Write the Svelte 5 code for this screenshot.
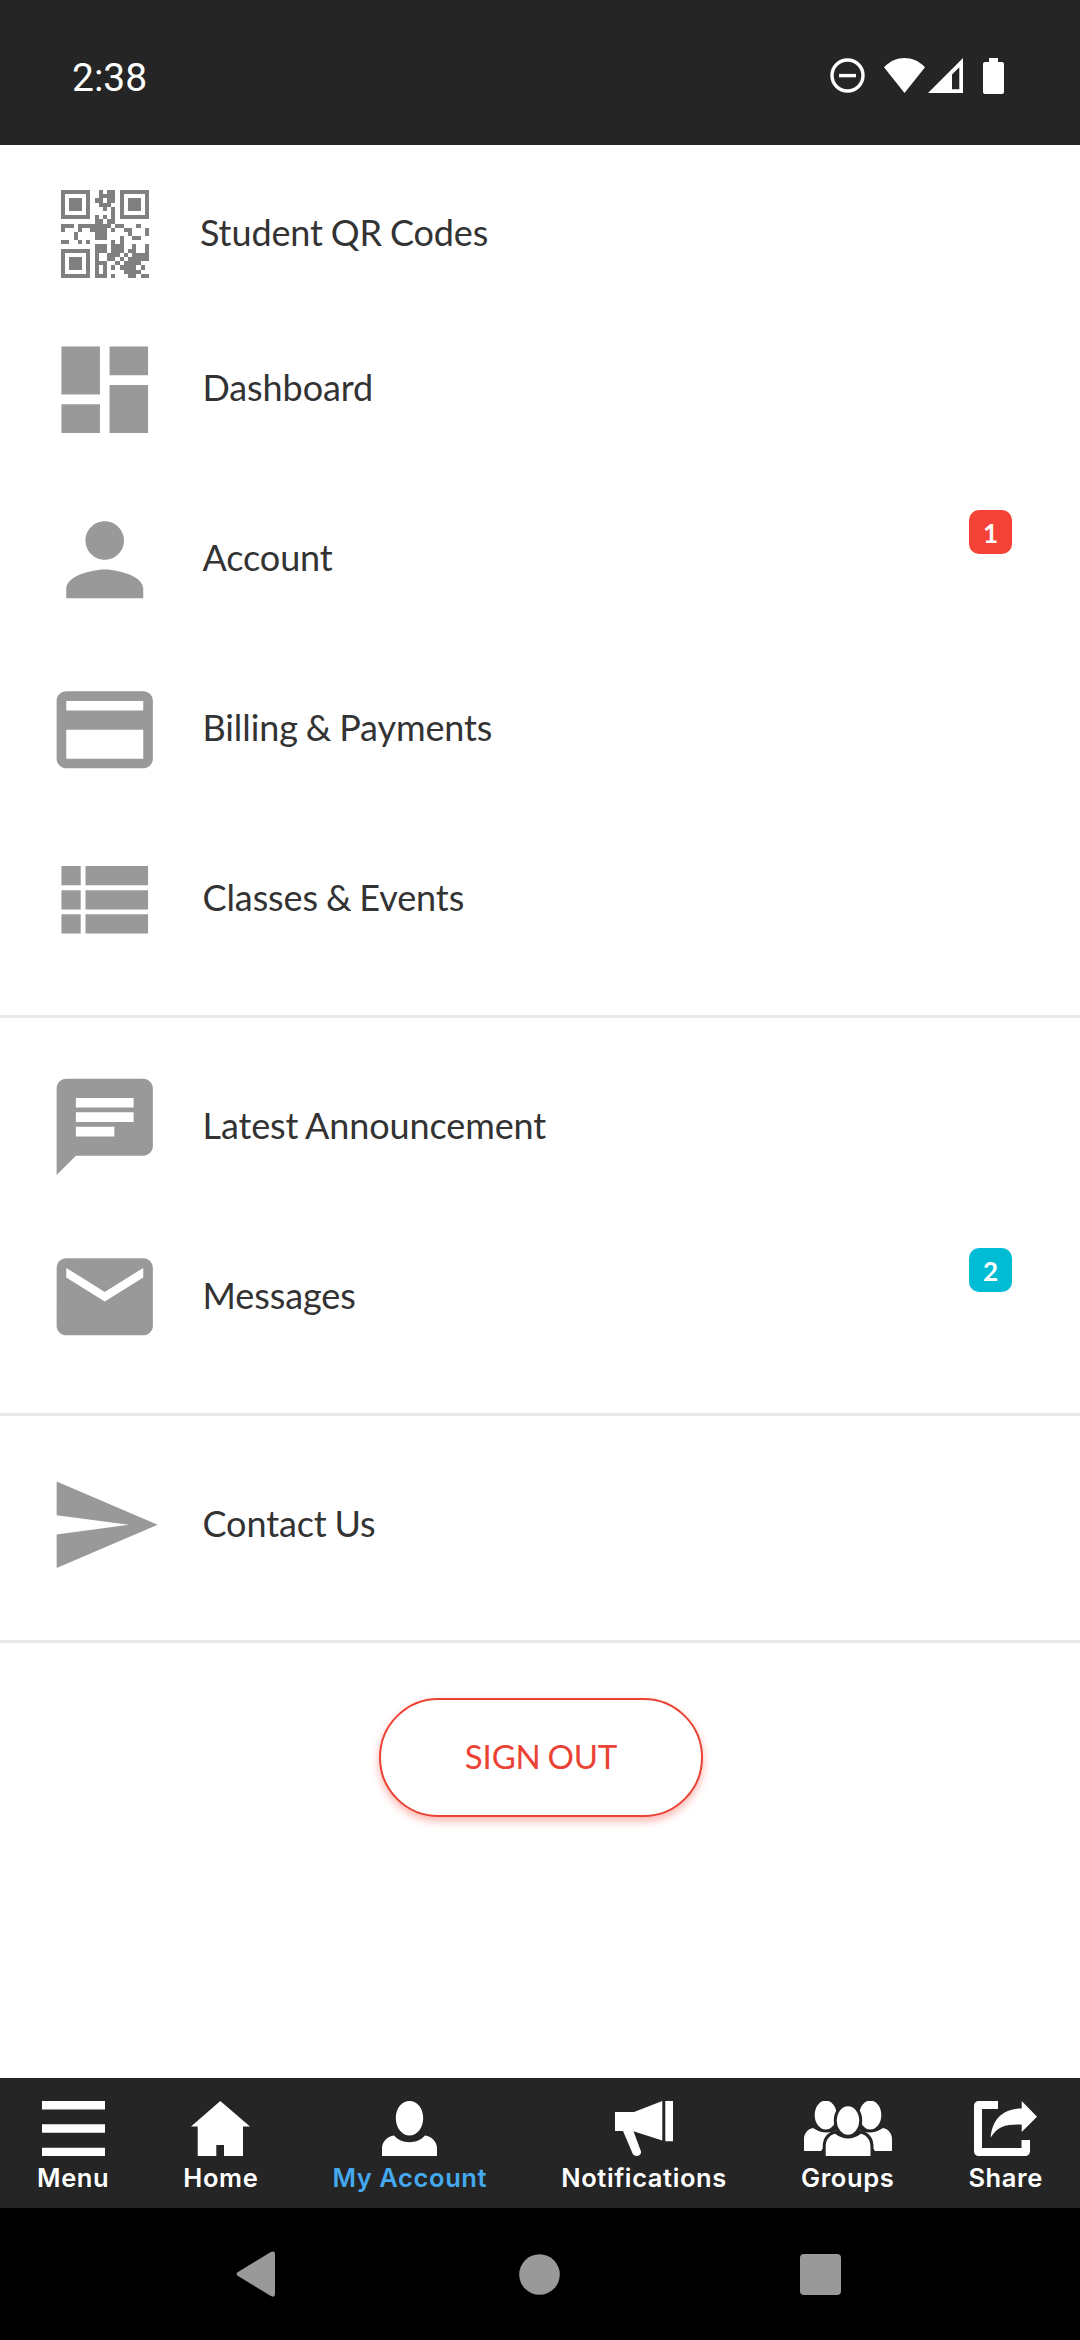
<script lang="ts">
    type MenuItem = { label: string; icon: string; badge?: string; tone?: string };

    const groups: MenuItem[][] = [
        [
            { label: 'Dashboard', icon: 'M3 13h8V3H3v10zm0 8h8v-6H3v6zm10 0h8V11h-8v10zm0-18v6h8V3h-8z' },
            {
                label: 'Account',
                icon: 'M12 12c2.21 0 4-1.79 4-4s-1.79-4-4-4-4 1.79-4 4 1.79 4 4 4zm0 2c-2.67 0-8 1.34-8 4v2h16v-2c0-2.66-5.33-4-8-4z',
                badge: '1',
                tone: 'red'
            },
            {
                label: 'Billing & Payments',
                icon: 'M20 4H4c-1.11 0-2 .89-2 2v12c0 1.11.89 2 2 2h16c1.11 0 2-.89 2-2V6c0-1.11-.89-2-2-2zm0 14H4v-6h16v6zm0-10H4V6h16v2z'
            },
            {
                label: 'Classes & Events',
                icon: 'M3 14h4v-4H3v4zm0 5h4v-4H3v4zM3 9h4V5H3v4zm5 5h13v-4H8v4zm0 5h13v-4H8v4zM8 5v4h13V5H8z'
            }
        ],
        [
            {
                label: 'Latest Announcement',
                icon: 'M4 2h16c1.1 0 2 .9 2 2v12c0 1.1-.9 2-2 2H6l-4 4V4c0-1.1.9-2 2-2zM6 6v2h12V6H6zm0 3v2h12V9H6zm0 3v2h8v-2H6z'
            },
            {
                label: 'Messages',
                icon: 'M20 4H4c-1.1 0-1.99.9-1.99 2L2 18c0 1.1.9 2 2 2h16c1.1 0 2-.9 2-2V6c0-1.1-.9-2-2-2zm0 4l-8 5-8-5V6l8 5 8-5v2z',
                badge: '2',
                tone: 'cyan'
            }
        ],
        [{ label: 'Contact Us', icon: 'M2.01 21L23 12 2.01 3 2 10l15 2-15 2z' }]
    ];

    // one string per row of modules
    const qr = [
        '#######..#.##.#######',
        '#.....#..####.#.....#',
        '#.###.#.##.##.#.###.#',
        '#.###.#..###..#.###.#',
        '#.###.#...#.#.#.###.#',
        '#.....#.....#.#.....#',
        '#######.#.#.#.#######',
        '........##.##........',
        '###.########.##...#..',
        '#...#..####.#..##...#',
        '...#....###.....#...#',
        '...#....###...#..##..',
        '##..#.#.....#.#......',
        '........###.###..#..#',
        '#######.###.###.##..#',
        '#.....#.#..###.#.####',
        '#.###.#.#..##.#.#####',
        '#.###.#.###..#.####..',
        '#.###.#.#.#.#.####.#.',
        '#.....#.#.#....####..',
        '#######.###.#...##.##'
    ];

    const qrPath = qr
        .map((row, y) => [...row].map((c, x) => (c === '#' ? `M${x} ${y}h1v1h-1z` : '')).join(''))
        .join('');

    let active = 'My Account';

    const tabs = [
        { label: 'Menu', width: 63, icon: 'M0 0h63v8.4H0zM0 23.2h63v8.6H0zM0 46.8h63V55H0z' },
        { label: 'Home', width: 59, icon: 'M29.3 0L59 25.5h-7V55H33V44h-7.7v11H6.7V25.5H0z' },
        {
            label: 'My Account',
            width: 55,
            icon: 'M27.5 0c7.5 0 13.7 7 13.7 17s-6.2 17.5-13.7 17.5S13.8 27 13.8 17 20 0 27.5 0zM12 34.5c4 4.5 9 6.7 15.5 6.7S39 39 43 34.5c7 1 12 6.5 12 13V55H0v-7.5c0-6.5 5-12 12-13z'
        },
        {
            label: 'Notifications',
            width: 58,
            icon: 'M0 11h19L47.3 0v39.5L18.5 30.2 26 50.5c.8 4.5-6.5 6-8.3 2.3L8 30H0zM50.3 0H58v40.3h-7.7z'
        },
        { label: 'Groups', width: 88, icon: '' },
        {
            label: 'Share',
            width: 63,
            icon: 'M5 0h19v8H8v39h39.5v-8H56v11c0 3-2 5-5 5H5c-3 0-5-2-5-5V5c0-3 2-5 5-5zM47.7 0L63 15.7 47.7 31v-7.5c-15-.5-24 1.5-31 13C18 19 28 7.5 47.7 7.5z'
        }
    ];
</script>

<div class="screen">
    <header class="status">
        <span class="time">2:38</span>
        <div class="status-icons">
            <svg class="dnd" width="35" height="35" viewBox="0 0 35 35">
                <circle cx="17.5" cy="17.5" r="15.5" fill="none" stroke="#fff" stroke-width="3.4" />
                <path d="M9 15.9h17v3.4H9z" />
            </svg>
            <svg class="wifi" width="41" height="35" viewBox="0 0 41 35">
                <path d="M0 9.3C12-3 29-3 41 9.3L20.5 35z" />
            </svg>
            <svg class="signal" width="35" height="35" viewBox="0 0 35 35">
                <path fill-rule="evenodd" d="M35 0v35H0zM31.3 9.3L24 16.6v14.7h7.3z" />
            </svg>
            <svg width="21" height="36" viewBox="0 0 21 36">
                <path d="M6 0h9v4h4q2 0 2 2v28q0 2-2 2H2q-2 0-2-2V6q0-2 2-2h4z" />
            </svg>
        </div>
    </header>

    <main>
        <div class="item qr-item">
            <svg class="qr" viewBox="0 0 21 21" shape-rendering="crispEdges">
                <path d={qrPath} />
            </svg>
            <span class="label">Student QR Codes</span>
        </div>

        {#each groups as group}
            <div class="group">
                {#each group as item}
                    <div class="item">
                        <svg class="icon" viewBox="0 0 24 24"><path d={item.icon} /></svg>
                        <span class="label">{item.label}</span>
                        {#if item.badge}
                            <span class="badge {item.tone}">{item.badge}</span>
                        {/if}
                    </div>
                {/each}
            </div>
        {/each}

        <button class="sign-out">SIGN OUT</button>
    </main>

    <nav class="tabs">
        {#each tabs as tab}
            <!-- svelte-ignore a11y_click_events_have_key_events, a11y_no_static_element_interactions -->
            <div class="tab" class:active={tab.label === active} on:click={() => (active = tab.label)}>
                <svg width={tab.width} height="55" viewBox="0 0 {tab.width} 55">
                    {#if tab.label === 'Groups'}
                        <ellipse cx="21.7" cy="14" rx="11" ry="14.5" />
                        <ellipse cx="66.3" cy="14" rx="11" ry="14.5" />
                        <path d="M0 50V38c0-6 4-10 9-11q12 8 24 2L17 50zM88 50V38c0-6-4-10-9-11q-12 8-24 2l16 21z" />
                        <g class="front">
                            <path d="M21.7 58V46c0-7 3-11.5 9.3-13.3q13 9.5 26 0C63.3 34.5 66.5 39 66.5 46v12z" />
                            <ellipse cx="44" cy="19.5" rx="11.2" ry="14.3" />
                        </g>
                    {:else}
                        <path d={tab.icon} />
                    {/if}
                </svg>
                <span>{tab.label}</span>
            </div>
        {/each}
    </nav>

    <footer class="system-nav">
        <svg width="42" height="46" viewBox="0 0 42 46">
            <path d="M34 1.5q5-3 5 2v39q0 5-5 2L2 25q-3-2 0-4z" />
        </svg>
        <svg width="41" height="41" viewBox="0 0 41 41"><circle cx="20.5" cy="20.5" r="20.3" /></svg>
        <svg width="41" height="41" viewBox="0 0 41 41"><rect width="41" height="41" rx="4" /></svg>
    </footer>
</div>

<style>
:global(body) {
    margin: 0;
    background-color: #fff;
}

.screen {
    display: flex;
    flex-direction: column;
    width: 1080px;
    height: 2340px;
    overflow: hidden;
    font-family: Lato, sans-serif;
    color: #333;
}

svg {
    display: block;
    flex: none;
}

/* Status bar */
.status {
    display: flex;
    align-items: center;
    justify-content: space-between;
    box-sizing: border-box;
    height: 145px;
    padding: 8px 76px 0 72px;
    background-color: #252525;
}

.time {
    font-family: Roboto, sans-serif;
    font-size: 39px;
    line-height: 46px;
    padding-top: 3px;
    color: #fff;
}

.status-icons {
    display: flex;
    align-items: center;
    padding-bottom: 2px;
    fill: #fff;
}

.dnd {
    margin-right: 19px;
}

.wifi {
    margin-right: 3px;
}

.signal {
    margin-right: 20px;
}

/* Menu */
main {
    flex: 1;
}

.item {
    display: flex;
    align-items: center;
    height: 170px;
    padding-left: 47px;
}

.qr-item {
    height: 141.4px;
    padding: 18px 0 0 61px;
}

.qr {
    width: 88px;
    height: 88px;
    margin-right: 51px;
    fill: #808080;
}

.icon {
    width: 115.5px;
    height: 115.5px;
    margin-right: 40px;
    fill: #999;
}

.label {
    flex: 1;
    font-size: 36px;
    line-height: 44px;
    padding-bottom: 4px;
    letter-spacing: -0.1px;
    word-spacing: -1.2px;
}

.group {
    padding-bottom: 30.6px;
    margin-bottom: 24px;
    border-bottom: 3px solid #e8e8e8;
}

.badge {
    align-self: flex-start;
    width: 43px;
    height: 44px;
    margin: 36px 68px 0 0;
    border-radius: 10px;
    font-size: 26px;
    font-weight: 700;
    line-height: 46px;
    text-align: center;
    color: #fff;
}

.red {
    background-color: #f44336;
}

.cyan {
    background-color: #00bcd4;
}

.sign-out {
    display: block;
    width: 324px;
    height: 119px;
    margin: 55px 0 0 379px;
    padding: 0 0 4px;
    border: 2px solid #ea4335;
    border-radius: 60px;
    background-color: #fff;
    box-shadow: 0 4px 8px rgba(244, 67, 54, 0.4);
    font-family: inherit;
    font-size: 33px;
    letter-spacing: -0.15px;
    word-spacing: -1.5px;
    color: #ea4335;
}

/* Tabs */
.tabs {
    display: flex;
    justify-content: space-around;
    box-sizing: border-box;
    height: 130px;
    padding-top: 23px;
    background-color: #252525;
}

.tab {
    display: flex;
    flex-direction: column;
    align-items: center;
    font-family: Inter, sans-serif;
    font-size: 25.5px;
    font-weight: 600;
    line-height: 30px;
    letter-spacing: 0.6px;
    color: #fff;
}

.tab svg {
    margin-bottom: 7px;
    fill: #fff;
}

.front {
    stroke: #252525;
    stroke-width: 6px;
    paint-order: stroke;
}

.active {
    color: #45a9f0;
}

/* System navigation */
.system-nav {
    display: flex;
    align-items: center;
    justify-content: space-between;
    box-sizing: border-box;
    height: 132px;
    padding: 0 239px 0 236px;
    background-color: #000;
    fill: #999;
}
</style>
